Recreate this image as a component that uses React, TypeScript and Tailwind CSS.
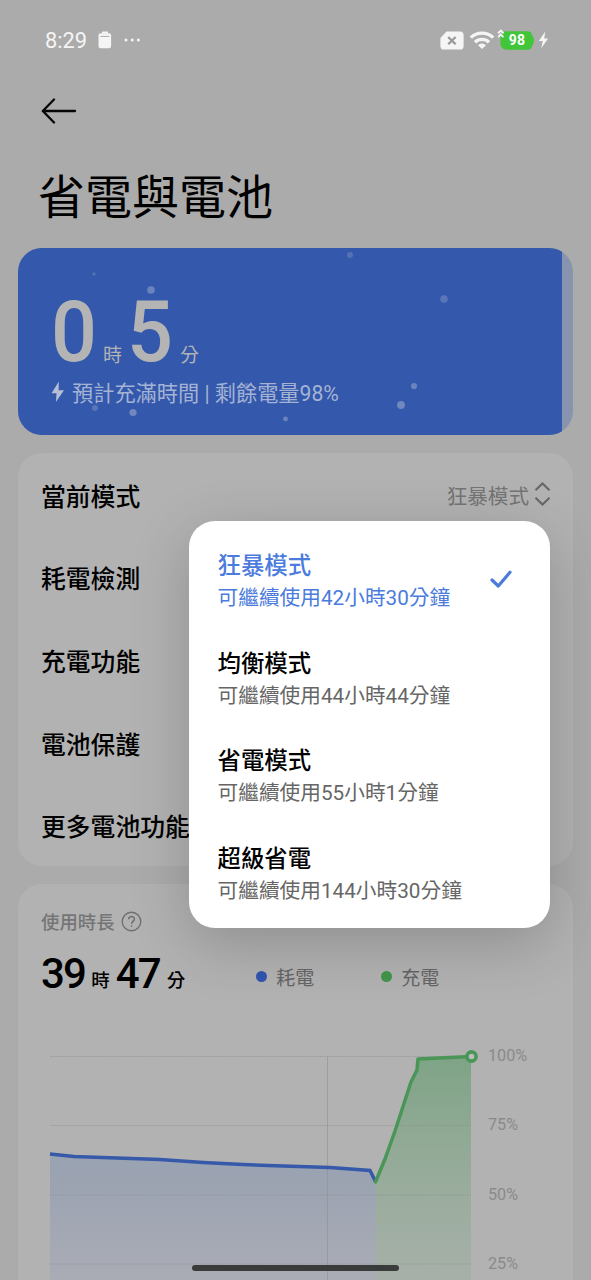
import React from "react";

const MENU_ROWS = ["當前模式", "耗電檢測", "充電功能", "電池保護", "更多電池功能"];

const MODES = [
    { name: "狂暴模式", remaining: "可繼續使用42小時30分鐘", active: true },
    { name: "均衡模式", remaining: "可繼續使用44小時44分鐘", active: false },
    { name: "省電模式", remaining: "可繼續使用55小時1分鐘", active: false },
    { name: "超級省電", remaining: "可繼續使用144小時30分鐘", active: false },
];

const BUBBLES = [
    { x: 332, y: 7, r: 3, o: 0.3 },
    { x: 76, y: 26, r: 1.7, o: 0.3 },
    { x: 133, y: 42, r: 3.8, o: 0.5 },
    { x: 426, y: 51, r: 3.8, o: 0.35 },
    { x: 396, y: 138, r: 3.1, o: 0.5 },
    { x: 383, y: 157, r: 3.9, o: 0.55 },
    { x: 228.5, y: 138, r: 3, o: 0.35 },
    { x: 77, y: 160, r: 3, o: 0.35 },
    { x: 115, y: 164.5, r: 3.6, o: 0.55 },
    { x: 267.5, y: 171, r: 2.4, o: 0.5 },
];

const GRID_Y = [28.5, 97.5, 167, 236];

function StatusBar() {
    return (
        <div className="flex h-20 items-center justify-between pl-[45px] pr-[42px] text-[#f5f5f5]">
            <div className="flex items-center">
                <span className="pt-[2px] text-[21.8px] leading-6">8:29</span>
                <svg className="ml-[11px]" width="14" height="18" viewBox="0 0 14 18">
                    <rect x="4" y="0.5" width="6" height="2" rx="0.8" fill="currentColor" />
                    <rect x="0.5" y="2.2" width="12.6" height="15" rx="2.2" fill="currentColor" />
                    <path d="M2.5 5.4h8.8" stroke="#ababab" strokeWidth="1" />
                </svg>
                <svg className="ml-[12px]" width="17" height="4" viewBox="0 0 17 4">
                    <circle cx="2" cy="2" r="1.5" fill="currentColor" />
                    <circle cx="8.2" cy="2" r="1.5" fill="currentColor" />
                    <circle cx="14.4" cy="2" r="1.5" fill="currentColor" />
                </svg>
            </div>
            <div className="flex items-center">
                <svg width="24" height="19" viewBox="0 0 24 19">
                    <path d="M6.5 0.5H20a3.6 3.6 0 0 1 3.6 3.6v10.8a3.6 3.6 0 0 1-3.6 3.6H4a3.6 3.6 0 0 1-3.6-3.6V7z" fill="currentColor" />
                    <path d="M8.2 6l7.400 7.200M15.600 6l-7.400 7.200" stroke="#999" strokeWidth="2.3" />
                </svg>
                <svg className="ml-[5px]" width="26" height="18" viewBox="0 0 26 18" fill="none" stroke="currentColor" strokeWidth="3.3">
                    <path d="M1.8 6.600a16 16 0 0 1 22.4 0" />
                    <path d="M6 11.200a10 10 0 0 1 14 0" />
                    <path d="M9 14.2a5.8 5.8 0 0 1 8 0L13 18z" fill="currentColor" stroke="none" />
                </svg>
                <div className="relative ml-[5px] h-[19px] w-[34px]">
                    <svg className="overflow-visible" width="34" height="19" viewBox="0 0 35 19">
                        <path d="M6 0h22.500c2.500 0 4 1.400 4.500 3.500l1.500 3.500c.6 1.500.6 3.500 0 5L33 15.500c-.5 2.100-2 3.500-4.500 3.500H6.500a6 6 0 0 1-6-6V6A6 6 0 0 1 6 0z" fill="#40c638" />
                        <path d="M-2 2l2.800-2.700L3.600 2M-2 6l2.800-2.700L3.600 6" stroke="#f5f5f5" strokeWidth="1.900" fill="none" />
                    </svg>
                    <span className="absolute inset-0 text-center text-[14px] font-bold leading-[19px] tracking-[0.3px] text-white">98</span>
                </div>
                <svg className="ml-[4px]" width="11" height="18" viewBox="0 0 10 18">
                    <path d="M6.800 0.500L0.300 10h3.900L2.800 17.200 9.600 7.600H5.700z" fill="currentColor" />
                </svg>
            </div>
        </div>
    );
}

function BatteryCard() {
    return (
        <div className="relative mx-[18px] mt-[18px] h-[187px] overflow-hidden rounded-[24px] bg-[#8794b0]">
            <div className="h-full w-[544px] bg-[#3358ac] pl-[33px] pt-[48px] text-[#b4b4b5]">
                <div className="flex h-[72px] items-end">
                    <span className="w-[52px] origin-left scale-x-[0.94] text-[86px] font-medium leading-[73px]">0</span>
                    <span className="text-[19px] leading-[25px]">時</span>
                    <span className="ml-[5px] w-[53px] origin-left scale-x-[0.94] text-[86px] font-medium leading-[73px]">5</span>
                    <span className="text-[19px] leading-[25px]">分</span>
                </div>
                <div className="mt-[12px] flex h-7 items-center text-[#a4b3d3]">
                    <svg className="mb-1" width="14" height="22" viewBox="0 0 14 22">
                        <path d="M7.800 0.500L0.500 12.300h5L4.900 21 13 9.200H7.600z" fill="#b4bed4" />
                    </svg>
                    <span className="ml-[7px] whitespace-nowrap text-[21.2px] leading-7">預計充滿時間 | 剩餘電量98%</span>
                </div>
            </div>
            <svg className="pointer-events-none absolute inset-0" width="555" height="187">
                {BUBBLES.map((b) => (
                    <circle key={`${b.x}-${b.y}`} cx={b.x} cy={b.y} r={b.r} fill="#a3b0cd" opacity={b.o} />
                ))}
            </svg>
        </div>
    );
}

function ModeMenu() {
    return (
        <div className="absolute left-[188.5px] top-[521px] flex h-[407px] w-[361px] flex-col rounded-[26px] bg-white pt-[9px] shadow-[0_16px_60px_rgba(0,0,0,0.2)]">
            {MODES.map((mode) => (
                <div key={mode.name} className={`flex h-[97.5px] items-center justify-between pl-[29px] pr-[37px] ${mode.active ? "text-[#4a7bdd]" : "text-black"}`}>
                    <div className="flex flex-col pt-[6px]">
                        <span className="text-[23.4px] font-medium leading-[34px]">{mode.name}</span>
                        <span className={`whitespace-nowrap text-[20.7px] leading-[31px] ${mode.active ? "text-[#4a7bdd]" : "text-[#666]"}`}>{mode.remaining}</span>
                    </div>
                    {mode.active && (
                        <svg width="24" height="20" viewBox="0 0 24 20" fill="none" stroke="#4a7bdd" strokeWidth="3.2" strokeLinecap="round" strokeLinejoin="round">
                            <path d="M3 11l6.300 6L21 3.300" />
                        </svg>
                    )}
                </div>
            ))}
        </div>
    );
}

function UsageChart() {
    return (
        <div className="flex">
            <svg width="463" height="252" viewBox="0 0 463 252" fill="none">
                <defs>
                    <linearGradient id="drain" x1="0" y1="120" x2="0" y2="252" gradientUnits="userSpaceOnUse">
                        <stop offset="0" stopColor="#7f94b4" stopOpacity="0.5" />
                        <stop offset="0.3" stopColor="#7b8db0" stopOpacity="0.4" />
                        <stop offset="1" stopColor="#8794bf" stopOpacity="0.2" />
                    </linearGradient>
                    <linearGradient id="charge" x1="0" y1="30" x2="0" y2="252" gradientUnits="userSpaceOnUse">
                        <stop offset="0" stopColor="#4b9559" stopOpacity="0.5" />
                        <stop offset="1" stopColor="#6fa67a" stopOpacity="0.17" />
                    </linearGradient>
                </defs>
                <path d="M32 126L56 128.500 142 131.500 185 134.500 225 136.500 312 139.500 352 142.500 357.500 154V252H32z" fill="url(#drain)" />
                <path d="M357.500 154L367 131 377 103 393 54 399 42 400 31 453 28.500V252H357.500z" fill="url(#charge)" />
                {GRID_Y.map((y) => (
                    <path key={y} d={`M32 ${y}H453`} stroke="#8e8e8e" strokeOpacity="0.6" strokeDasharray="1.500 1" />
                ))}
                <path d="M309.500 28.500V252" stroke="#8e8e8e" strokeOpacity="0.55" />
                <path d="M32 126L56 128.500 142 131.500 185 134.500 225 136.500 250 137.500 312 139.500 352 142.500 357.500 153.500" stroke="#3659a9" strokeWidth="3.500" />
                <path d="M357.500 154L367 131 377 103 393 54 399 42 400 31 453 28.500" stroke="#4a9656" strokeWidth="3.500" strokeLinejoin="round" strokeLinecap="round" />
                <circle cx="453.500" cy="28.500" r="4.600" fill="#bcbcbc" stroke="#4a9656" strokeWidth="3.600" />
            </svg>
            <div className="flex flex-col pl-[7px] pt-[18px] text-[16.2px] text-[#8a8a8a]">
                <span className="h-[69.3px] leading-5">100%</span>
                <span className="h-[69.3px] leading-5">75%</span>
                <span className="h-[69.3px] leading-5">50%</span>
                <span className="leading-5">25%</span>
            </div>
        </div>
    );
}

export default function App() {
    return (
        <div className="relative h-[1280px] w-[591px] overflow-hidden bg-[#ababab] text-black" style={{ fontFamily: "Roboto, 'Noto Sans CJK TC', sans-serif" }}>
            <StatusBar />

            <div className="flex h-[62px] items-center pl-[41px]">
                <svg width="36" height="26" viewBox="0 0 36 26" fill="none" stroke="#050505" strokeWidth="2.300" strokeLinecap="round" strokeLinejoin="round">
                    <path d="M34 13H2M13 1.500L1.800 13 13 24.500" />
                </svg>
            </div>

            <h1 className="pl-[38px] pt-[24px] text-[47px] leading-[64px]">省電與電池</h1>

            <BatteryCard />

            {/* Settings list */}
            <div className="mx-[18px] mt-[18px] rounded-[24px] bg-[#b2b2b2] pl-[23px] pr-[22px]">
                {MENU_ROWS.map((label, i) => (
                    <div key={label} className="flex h-[82.6px] items-center justify-between">
                        <span className="pt-[7px] text-[24.8px] font-medium leading-9">{label}</span>
                        {i === 0 && (
                            <div className="flex items-center text-[#747474]">
                                <span className="pt-[5px] text-[20.6px] leading-8">{MODES[0].name}</span>
                                <svg className="ml-[5px]" width="17" height="24" viewBox="0 0 17 24" fill="none" stroke="#666" strokeWidth="2">
                                    <path d="M1.500 8.300L8.500 1.500l7 6.800M1.500 15.700l7 6.800 7-6.800" />
                                </svg>
                            </div>
                        )}
                    </div>
                ))}
            </div>

            {/* Usage time */}
            <div className="mx-[18px] mt-[18px] h-[420px] rounded-t-[24px] bg-[#b2b2b2] pt-[22px]">
                <div className="flex h-8 items-center pl-[23px] text-[#757575]">
                    <span className="pt-[3px] text-[18.4px] font-medium leading-8">使用時長</span>
                    <svg className="ml-[6px]" width="21" height="21" viewBox="0 0 21 21" fill="none" stroke="#707070">
                        <circle cx="10.500" cy="10.500" r="9.300" strokeWidth="1.400" />
                        <path d="M7.700 8.300c0-3.900 5.700-3.700 5.700-.3 0 2.300-2.800 2.400-2.800 4.700" strokeWidth="1.500" />
                        <circle cx="10.600" cy="15" r="0.500" fill="#707070" strokeWidth="0.800" />
                    </svg>
                </div>
                <div className="flex h-[56px] items-end pl-[23px]">
                    <span className="text-[42px] font-medium leading-[41px] tracking-[-1.800px]">39</span>
                    <span className="ml-[6px] text-[18.500px] font-medium leading-[25px]">時</span>
                    <span className="ml-[6px] text-[42px] font-medium leading-[41px] tracking-[-1.800px]">47</span>
                    <span className="ml-[7px] text-[18.500px] font-medium leading-[25px]">分</span>
                    <div className="ml-[71px] flex h-[34px] items-center text-[19px] text-[#646464]">
                        <i className="h-[11px] w-[11px] rounded-full bg-[#3055ae]" />
                        <span className="ml-[9px] pt-[4px] leading-7">耗電</span>
                        <i className="ml-[67px] h-[11px] w-[11px] rounded-full bg-[#43964b]" />
                        <span className="ml-[9px] pt-[4px] leading-7">充電</span>
                    </div>
                </div>
                <div className="mt-[34px]">
                    <UsageChart />
                </div>
            </div>

            <ModeMenu />

            <div className="absolute bottom-[9px] left-[192px] h-[6px] w-[207px] rounded-full bg-[#3a3c3c]" />
        </div>
    );
}
